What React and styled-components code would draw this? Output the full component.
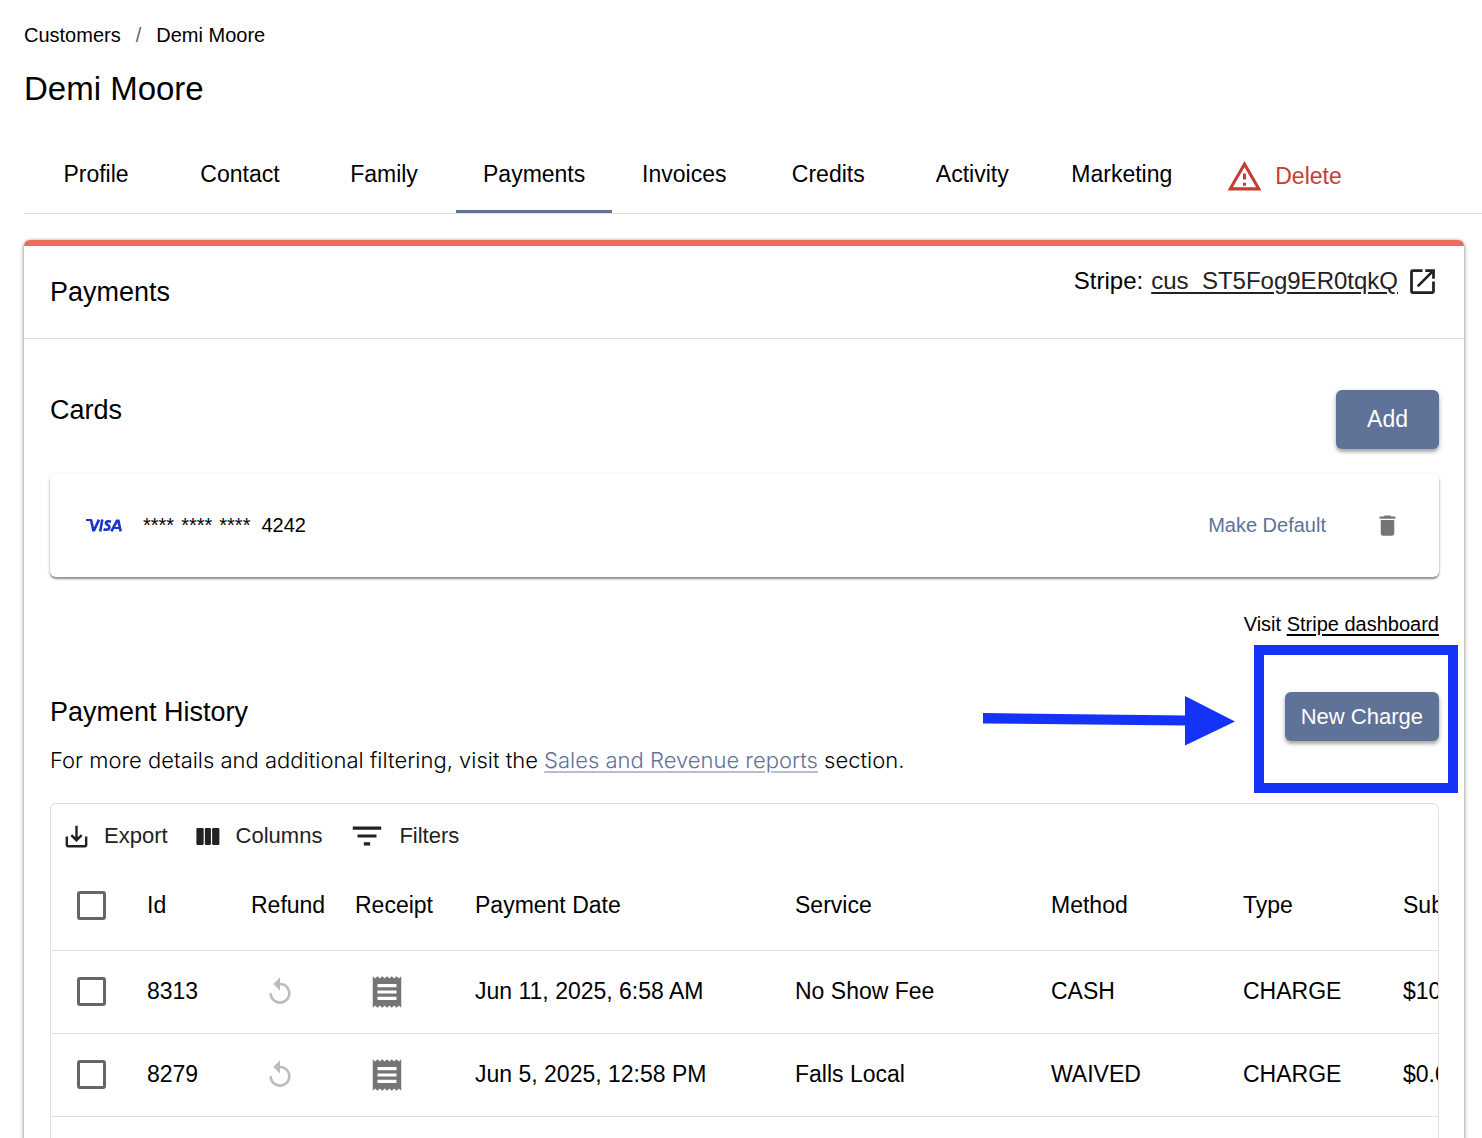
import styled, { createGlobalStyle } from "styled-components";
import {
  MdDelete,
  MdFilterList,
  MdOpenInNew,
  MdOutlineWarningAmber,
  MdReceipt,
  MdReplay,
  MdSaveAlt,
} from "react-icons/md";

const GlobalStyle = createGlobalStyle`
  :root {
    --color-primary: #5f7298;
    --color-accent: #ed6a5e;
    --color-danger: #c63d35;
    --color-divider: #e0e0e0;
    --color-icon: #757575;
    --color-text: #000;
    --color-text-soft: #222;
    --color-marker: #1433f7;
  }
  *, *::before, *::after {
    box-sizing: border-box;
  }
  body {
    margin: 0;
    height: 100vh;
    overflow: hidden;
    background: #fff;
    color: var(--color-text);
    font-family: "Liberation Sans", Arial, Helvetica, sans-serif;
    font-size: 23px;
  }
  button {
    font-family: inherit;
    cursor: pointer;
  }
`;

const Page = styled.main`
  padding: 20px 0 0 24px;
`;

const Breadcrumbs = styled.nav`
  display: flex;
  gap: 15px;
  font-size: 20px;
  line-height: 30px;
`;

const Crumb = styled.a`
  color: inherit;
  text-decoration: none;
`;

const Separator = styled.span`
  color: #666;
`;

const PageTitle = styled.h1`
  margin: 16px 0 0;
  font-size: 33px;
  font-weight: 400;
  line-height: 46px;
`;

const Tabs = styled.div`
  display: flex;
  margin-top: 24px;
  border-bottom: 1px solid var(--color-divider);
`;

const Tab = styled.button`
  display: flex;
  align-items: center;
  justify-content: center;
  gap: 12px;
  min-width: 144px;
  height: 77px;
  padding: ${({ $danger }) => ($danger ? "4px 27px 0" : "0 27px")};
  border: none;
  border-top: 3px solid transparent;
  border-bottom: 3px solid
    ${({ $active }) => ($active ? "var(--color-primary)" : "transparent")};
  background: none;
  color: ${({ $danger }) => ($danger ? "var(--color-danger)" : "inherit")};
  font-size: 23px;
  white-space: nowrap;
`;

const Panel = styled.section`
  margin: 26px 18px 0 0;
  border-top: 6px solid var(--color-accent);
  border-radius: 6px;
  background: #fff;
  box-shadow: 0 2px 5px rgba(0, 0, 0, 0.4), 0 0 3px rgba(0, 0, 0, 0.2);
`;

const PanelHeader = styled.header`
  display: flex;
  justify-content: space-between;
  padding: 18px 25px 18px 26px;
  min-height: 93px;
  border-bottom: 1px solid var(--color-divider);
`;

const Heading = styled.h2`
  margin: 0;
  padding: 10px 0;
  font-size: 27px;
  font-weight: 400;
  line-height: 36px;
`;

const StripeCustomer = styled.div`
  display: flex;
  align-items: center;
  gap: 8px;
  height: 34px;
  font-size: 24px;
`;

const TextLink = styled.a`
  color: ${({ $color }) => $color || "inherit"};
  text-decoration-color: ${({ $underline }) => $underline || "currentColor"};
  text-underline-offset: 3px;
`;

const IconLink = styled.a`
  display: flex;
  color: var(--color-text-soft);
`;

const PanelBody = styled.div`
  padding: 51px 25px 0 26px;
`;

const SectionTop = styled.div`
  display: flex;
  align-items: flex-start;
  justify-content: space-between;
`;

const SectionHeading = styled.h3`
  margin: 0;
  font-size: 27px;
  font-weight: 400;
  line-height: 40px;
`;

const PrimaryButton = styled.button`
  height: ${({ $large }) => ($large ? 59 : 49)}px;
  padding: 0 ${({ $large }) => ($large ? 31 : 16)}px;
  border: none;
  border-radius: 6px;
  background: var(--color-primary);
  box-shadow: 0 3px 3px rgba(0, 0, 0, 0.22), 0 2px 6px rgba(0, 0, 0, 0.18);
  color: #fff;
  font-size: ${({ $large }) => ($large ? 23 : 22)}px;
  white-space: nowrap;
`;

const CardRow = styled.div`
  display: flex;
  align-items: center;
  height: 103px;
  margin-top: 25px;
  padding: 0 38px 0 36px;
  border-radius: 6px;
  box-shadow: 0 2px 2px rgba(0, 0, 0, 0.4), 0 1px 4px rgba(0, 0, 0, 0.12);
  font-size: 20px;
`;

const CardNumber = styled.span`
  display: flex;
  gap: 7px;
  margin-left: 20px;
  margin-right: auto;
`;

const LastDigits = styled.span`
  margin-left: 4px;
`;

const LinkButton = styled.button`
  margin-right: 48px;
  padding: 0;
  border: none;
  background: none;
  color: var(--color-primary);
  font-size: 20px;
`;

const IconButton = styled.button`
  display: flex;
  padding: 0;
  border: none;
  background: none;
  color: var(--color-icon);
  &:disabled {
    color: #bdbdbd;
    cursor: default;
  }
`;

const DashboardNote = styled.p`
  margin: 32px 0 0;
  font-size: 20px;
  line-height: 30px;
  text-align: right;
`;

const HistoryTop = styled(SectionTop)`
  margin-top: 53px;
`;

const Description = styled.p`
  margin: 12px 0 0;
  font-family: Inter, "Liberation Sans", sans-serif;
  font-size: 22px;
  font-weight: 300;
  line-height: 32px;
`;

const ChargeAction = styled.div`
  position: relative;
`;

const Highlight = styled.div`
  position: absolute;
  inset: -47px -19px -52px -31px;
  border: 10px solid var(--color-marker);
  pointer-events: none;
`;

const Arrow = styled.svg`
  position: absolute;
  right: 204px;
  top: 4px;
  pointer-events: none;
`;

const Grid = styled.div`
  min-height: 600px;
  margin-top: 27px;
  overflow: hidden;
  border: 1px solid var(--color-divider);
  border-radius: 6px;
`;

const Toolbar = styled.div`
  display: flex;
  gap: 26px;
  height: 57px;
  padding: 7px 11px 0;
`;

const ToolbarButton = styled.button`
  display: flex;
  align-items: center;
  gap: 13px;
  padding: 0;
  border: none;
  background: none;
  color: var(--color-text-soft);
  font-size: 22px;
`;

const Table = styled.table`
  width: 1600px;
  table-layout: fixed;
  border-collapse: collapse;
  font-size: 23px;
`;

const Col = styled.col`
  width: ${({ $width }) => $width}px;
`;

const Row = styled.tr`
  height: ${({ $head }) => ($head ? 89 : 83)}px;
  border-bottom: 1px solid var(--color-divider);
`;

const Cell = styled.td`
  padding: 0 0 0 ${({ $inset = 16 }) => $inset}px;
  font-weight: 400;
  text-align: left;
  white-space: nowrap;
`;

const Checkbox = styled.input`
  display: block;
  appearance: none;
  width: 29px;
  height: 29px;
  margin: 0;
  border: 3px solid #666;
  border-radius: 3px;
  background: #fff;
  &:checked {
    background: var(--color-primary);
  }
`;

const tabs = [
  "Profile",
  "Contact",
  "Family",
  "Payments",
  "Invoices",
  "Credits",
  "Activity",
  "Marketing",
];

const columns = [
  { label: "Id", width: 104 },
  { label: "Refund", width: 104 },
  { label: "Receipt", width: 120 },
  { label: "Payment Date", width: 320 },
  { label: "Service", width: 256 },
  { label: "Method", width: 192 },
  { label: "Type", width: 160 },
  { label: "Subtotal", width: 264 },
];

const payments = [
  {
    id: 8313,
    date: "Jun 11, 2025, 6:58 AM",
    service: "No Show Fee",
    method: "CASH",
    type: "CHARGE",
    subtotal: "$10.00",
  },
  {
    id: 8279,
    date: "Jun 5, 2025, 12:58 PM",
    service: "Falls Local",
    method: "WAIVED",
    type: "CHARGE",
    subtotal: "$0.00",
  },
];

function VisaLogo() {
  return (
    <svg width="37" height="13" viewBox="0 0 37 13" role="img" aria-label="Visa">
      <g fill="none" stroke="#1a34c8" strokeWidth="2.6">
        <path d="M0 .8h3.600c1 0 1.500.4 1.700 1.200L7.300 11.200h.8L13 .6" />
        <path d="M16.300 .6L14.200 12.400" />
        <path d="M25 2.300c-2.600-.9-5-.4-5.200 1.200-.2 2 4 2 3.700 4.400-.3 2.500-3.500 2.900-6 1.900" transform="translate(0 .4)" />
        <path d="M25.300 12.400L31 1.900h1.400l2.300 10.500" />
        <path d="M28.200 9h5.300" strokeWidth="2" />
      </g>
    </svg>
  );
}

function ColumnsIcon() {
  return (
    <svg width="29" height="29" viewBox="0 0 24 24" fill="currentColor">
      <rect x="2" y="5" width="6" height="14" rx="1" />
      <rect x="9" y="5" width="5" height="14" rx="1" />
      <rect x="15" y="5" width="6" height="14" rx="1" />
    </svg>
  );
}

function PaymentRow({ payment }) {
  return (
    <Row>
      <Cell $inset={26}>
        <Checkbox type="checkbox" aria-label={`Select payment ${payment.id}`} />
      </Cell>
      <Cell>{payment.id}</Cell>
      <Cell $inset={29}>
        <IconButton disabled aria-label="Refund">
          <MdReplay size={32} />
        </IconButton>
      </Cell>
      <Cell $inset={29}>
        <IconButton aria-label="Receipt">
          <MdReceipt size={38} />
        </IconButton>
      </Cell>
      <Cell>{payment.date}</Cell>
      <Cell>{payment.service}</Cell>
      <Cell>{payment.method}</Cell>
      <Cell>{payment.type}</Cell>
      <Cell>{payment.subtotal}</Cell>
    </Row>
  );
}

function PaymentGrid() {
  return (
    <Grid>
      <Toolbar>
        <ToolbarButton>
          <MdSaveAlt size={29} />
          Export
        </ToolbarButton>
        <ToolbarButton>
          <ColumnsIcon />
          Columns
        </ToolbarButton>
        <ToolbarButton>
          <MdFilterList size={38} />
          Filters
        </ToolbarButton>
      </Toolbar>
      <Table>
        <colgroup>
          <Col $width={80} />
          {columns.map((column) => (
            <Col key={column.label} $width={column.width} />
          ))}
        </colgroup>
        <thead>
          <Row $head>
            <Cell as="th" $inset={26}>
              <Checkbox type="checkbox" aria-label="Select all payments" />
            </Cell>
            {columns.map((column) => (
              <Cell as="th" key={column.label}>
                {column.label}
              </Cell>
            ))}
          </Row>
        </thead>
        <tbody>
          {payments.map((payment) => (
            <PaymentRow key={payment.id} payment={payment} />
          ))}
        </tbody>
      </Table>
    </Grid>
  );
}

function App() {
  return (
    <>
      <GlobalStyle />
      <Page>
        <Breadcrumbs aria-label="Breadcrumb">
          <Crumb href="#customers">Customers</Crumb>
          <Separator>/</Separator>
          <Crumb href="#customer">Demi Moore</Crumb>
        </Breadcrumbs>
        <PageTitle>Demi Moore</PageTitle>
        <Tabs role="tablist">
          {tabs.map((tab) => (
            <Tab
              key={tab}
              role="tab"
              aria-selected={tab === "Payments"}
              $active={tab === "Payments"}
            >
              {tab}
            </Tab>
          ))}
          <Tab role="tab" $danger>
            <MdOutlineWarningAmber size={37} />
            Delete
          </Tab>
        </Tabs>
        <Panel>
          <PanelHeader>
            <Heading>Payments</Heading>
            <StripeCustomer>
              <span>Stripe:</span>
              <TextLink href="#stripe-customer" $color="var(--color-text-soft)">
                cus_ST5Fog9ER0tqkQ
              </TextLink>
              <IconLink href="#stripe-customer" aria-label="Open in Stripe">
                <MdOpenInNew size={33} />
              </IconLink>
            </StripeCustomer>
          </PanelHeader>
          <PanelBody>
            <SectionTop>
              <SectionHeading>Cards</SectionHeading>
              <PrimaryButton $large>Add</PrimaryButton>
            </SectionTop>
            <CardRow>
              <VisaLogo />
              <CardNumber>
                <span>****</span>
                <span>****</span>
                <span>****</span>
                <LastDigits>4242</LastDigits>
              </CardNumber>
              <LinkButton>Make Default</LinkButton>
              <IconButton aria-label="Remove card">
                <MdDelete size={27} />
              </IconButton>
            </CardRow>
            <DashboardNote>
              Visit <TextLink href="#stripe-dashboard">Stripe dashboard</TextLink>
            </DashboardNote>
            <HistoryTop>
              <div>
                <SectionHeading>Payment History</SectionHeading>
                <Description>
                  For more details and additional filtering, visit the{" "}
                  <TextLink
                    href="#reports"
                    $color="var(--color-primary)"
                    $underline="#b4bfd5"
                  >
                    Sales and Revenue reports
                  </TextLink>{" "}
                  section.
                </Description>
              </div>
              <ChargeAction>
                <PrimaryButton>New Charge</PrimaryButton>
                <Highlight />
                <Arrow width="252" height="50" viewBox="0 0 252 50">
                  <path
                    fill="var(--color-marker)"
                    d="M0 17l202 2.500V0l50 25.500L202 49.500V29.500L0 27.500z"
                  />
                </Arrow>
              </ChargeAction>
            </HistoryTop>
            <PaymentGrid />
          </PanelBody>
        </Panel>
      </Page>
    </>
  );
}

export default App;
